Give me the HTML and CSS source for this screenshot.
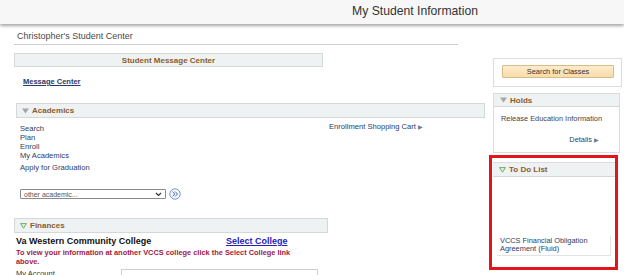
FILE: index.html
```html
<!DOCTYPE html>
<html lang="en">
<head>
    <meta charset="UTF-8">
    <meta name="viewport" content="width=device-width, initial-scale=1.0">
    <title>My Student Information</title>
    <link rel="stylesheet" href="styles.css">
</head>
<body>
    <header class="banner">
        <h1>My Student Information</h1>
    </header>

    <div class="layout">
        <div class="left-col">
            <div class="center-title">Christopher's Student Center</div>

            <div class="bar bar-center">Student Message Center</div>
            <a class="msg-link" href="#">Message Center</a>

            <div class="bar bar-wide">
                <svg class="tri" width="7" height="6" viewBox="0 0 7 6"><path d="M0 0.5 L7 0.5 L3.5 5.5 Z" fill="#a7a7a7"/></svg>
                Academics
            </div>
            <div class="acad-body">
                <div class="links">
                    <a href="#">Search</a>
                    <a href="#">Plan</a>
                    <a href="#">Enroll</a>
                    <a href="#">My Academics</a>
                    <a href="#" class="grad">Apply for Graduation</a>
                </div>
                <a class="cart" href="#">Enrollment Shopping Cart <span class="arrow">&#9654;</span></a>
            </div>

            <div class="select-row">
                <div class="fake-select">
                    <span>other academic...</span>
                    <svg width="7" height="5" viewBox="0 0 7 5"><path d="M1 1 L3.5 3.5 L6 1" fill="none" stroke="#333" stroke-width="1.2"/></svg>
                </div>
                <svg class="go" width="12" height="12" viewBox="0 0 12 12">
                    <circle cx="6" cy="6" r="5.2" fill="#f4f7fc" stroke="#6d8cc0" stroke-width="0.9"/>
                    <path d="M3.6 3.6 L5.8 6 L3.6 8.4 M6.2 3.6 L8.4 6 L6.2 8.4" fill="none" stroke="#4a6fb0" stroke-width="1"/>
                </svg>
            </div>

            <div class="bar">
                <svg class="tri" width="7" height="6" viewBox="0 0 7 6"><path d="M0.6 0.6 L6.4 0.6 L3.5 5.2 Z" fill="#e6f3e2" stroke="#5fa45a" stroke-width="0.9"/></svg>
                Finances
            </div>
            <div class="college-row">
                <span class="college">Va Western Community College</span>
                <a class="select-college" href="#">Select College</a>
            </div>
            <p class="notice">To view your information at another VCCS college click the Select College link above.</p>
            <div class="account-row">
                <span>My Account</span>
                <div class="account-box"></div>
            </div>
        </div>

        <aside class="right-col">
            <div class="box search-box">
                <button class="search-btn">Search for Classes</button>
            </div>

            <div class="box holds">
                <div class="box-head">
                    <svg class="tri" width="7" height="6" viewBox="0 0 7 6"><path d="M0 0.5 L7 0.5 L3.5 5.5 Z" fill="#a7a7a7"/></svg>
                    Holds
                </div>
                <div class="holds-item">Release Education Information</div>
                <a class="details" href="#">Details <span class="arrow">&#9654;</span></a>
            </div>

            <div class="highlight">
                <div class="todo">
                    <div class="box-head">
                        <svg class="tri" width="7" height="6" viewBox="0 0 7 6"><path d="M0.6 0.6 L6.4 0.6 L3.5 5.2 Z" fill="#e6f3e2" stroke="#5fa45a" stroke-width="0.9"/></svg>
                        To Do List
                    </div>
                    <div class="todo-item">VCCS Financial Obligation Agreement (Fluid)</div>
                </div>
            </div>
        </aside>
    </div>
</body>
</html>
```

FILE: styles.css
```css
body {
    margin: 0;
    font-family: 'Liberation Sans', Arial, sans-serif;
    background: #ffffff;
    color: #333;
    overflow: hidden;
}

.banner {
    height: 24px;
    background: #f7f7f8;
    box-shadow: 0 2px 3px rgba(0, 0, 0, 0.35);
}

.banner h1 {
    margin: 0 0 0 352px;
    font-size: 12.2px;
    font-weight: normal;
    line-height: 22px;
    color: #333;
}

.layout {
    display: grid;
    grid-template-columns: 475px 133px;
    padding-left: 14px;
}

/* left column */

.center-title {
    width: 441px;
    margin-top: 7px;
    padding: 0 0 2px 3px;
    font-size: 9px;
    line-height: 11px;
    color: #4a4a4a;
    border-bottom: 1px solid #cfcfcf;
}

.bar {
    display: flex;
    align-items: center;
    gap: 3px;
    width: 307px;
    height: 13px;
    margin-top: 18px;
    padding-left: 5px;
    background: #eef2f2;
    border: 1px solid #d4d8d8;
    font-size: 8px;
    font-weight: bold;
    color: #8c5b2c;
    box-sizing: content-box;
}

.bar-center {
    justify-content: center;
    margin-top: 8px;
    padding-left: 0;
    width: 307px;
    height: 12px;
}

.bar-wide {
    width: 462px;
    margin-top: 17px;
    margin-left: 2px;
}

.tri {
    flex: none;
}

.msg-link {
    display: block;
    width: max-content;
    margin: 10px 0 0 9px;
    font-size: 7.5px;
    line-height: 9px;
    font-weight: bold;
    color: #2a3a68;
}

.acad-body {
    display: grid;
    grid-template-columns: 309px auto;
    padding: 6px 0 0 6px;
}

.links a {
    display: block;
    font-size: 7.6px;
    line-height: 9px;
    color: #2b3c63;
    text-decoration: none;
}

.links .grad {
    margin-top: 3px;
}

.cart {
    font-size: 7.6px;
    line-height: 9px;
    color: #2b3c63;
    text-decoration: none;
    margin-top: -2px;
}

.arrow {
    font-size: 6px;
    color: #6a7a99;
}

.select-row {
    display: flex;
    align-items: center;
    gap: 3px;
    margin: 16px 0 0 6px;
}

.fake-select {
    display: flex;
    align-items: center;
    justify-content: space-between;
    width: 138px;
    height: 8px;
    padding: 0 3px;
    border: 1px solid #8a8a8a;
    border-radius: 1px;
    font-size: 7px;
    color: #555;
}

.college-row {
    display: grid;
    grid-template-columns: 210px auto;
    margin: 3px 0 0 2px;
    font-size: 9px;
    line-height: 11px;
    font-weight: bold;
}

.college {
    color: #111;
}

.select-college {
    color: #1d22b8;
}

.notice {
    width: 285px;
    margin: 2px 0 0 2px;
    font-size: 7.4px;
    line-height: 8.5px;
    font-weight: bold;
    color: #a3193f;
}

.account-row {
    display: grid;
    grid-template-columns: 105px 197px;
    margin: 3px 0 0 2px;
    font-size: 7.5px;
    color: #333;
}

.account-box {
    height: 20px;
    border: 1px solid #cfcfcf;
}

/* right column */

.right-col {
    padding-top: 34px;
}

.box {
    margin-left: 4px;
    border: 1px solid #dcdcdc;
    background: #fff;
}

.search-box {
    width: 127px;
    height: 27px;
}

.search-btn {
    display: block;
    width: 112px;
    height: 13px;
    margin: 6px 0 0 8px;
    padding: 0;
    font-family: inherit;
    font-size: 7.4px;
    color: #333;
    background: linear-gradient(#fdeccd, #f8dcaa);
    border: 1px solid #d9bc8a;
    border-radius: 1px;
}

.holds {
    width: 125px;
    height: 58px;
    margin-top: 6px;
}

.box-head {
    display: flex;
    align-items: center;
    gap: 3px;
    height: 12px;
    padding-left: 6px;
    background: #eef2f2;
    border-bottom: 1px solid #d4d8d8;
    font-size: 8px;
    font-weight: bold;
    color: #8c5b2c;
}

.holds-item {
    margin: 7px 0 0 7px;
    font-size: 7.4px;
    line-height: 9px;
    color: #444;
}

.details {
    display: block;
    margin: 12px 20px 0 0;
    text-align: right;
    font-size: 7.4px;
    line-height: 9px;
    color: #2b3c63;
    text-decoration: none;
}

.highlight {
    width: 123px;
    height: 109px;
    margin-top: 2px;
    border: 3px solid #e2141c;
}

.todo {
    margin: 4px 0 0 1px;
}

.todo .box-head {
    height: 13px;
    padding-left: 6px;
    border-top: 1px solid #dcdcdc;
}

.todo-item {
    width: 108px;
    margin: 59px 0 0 4px;
    padding: 1px 2px 2px 3px;
    font-size: 7.4px;
    line-height: 8px;
    color: #2b3c63;
    border-right: 1px solid #e3e3e3;
    border-bottom: 1px solid #e3e3e3;
}
```
